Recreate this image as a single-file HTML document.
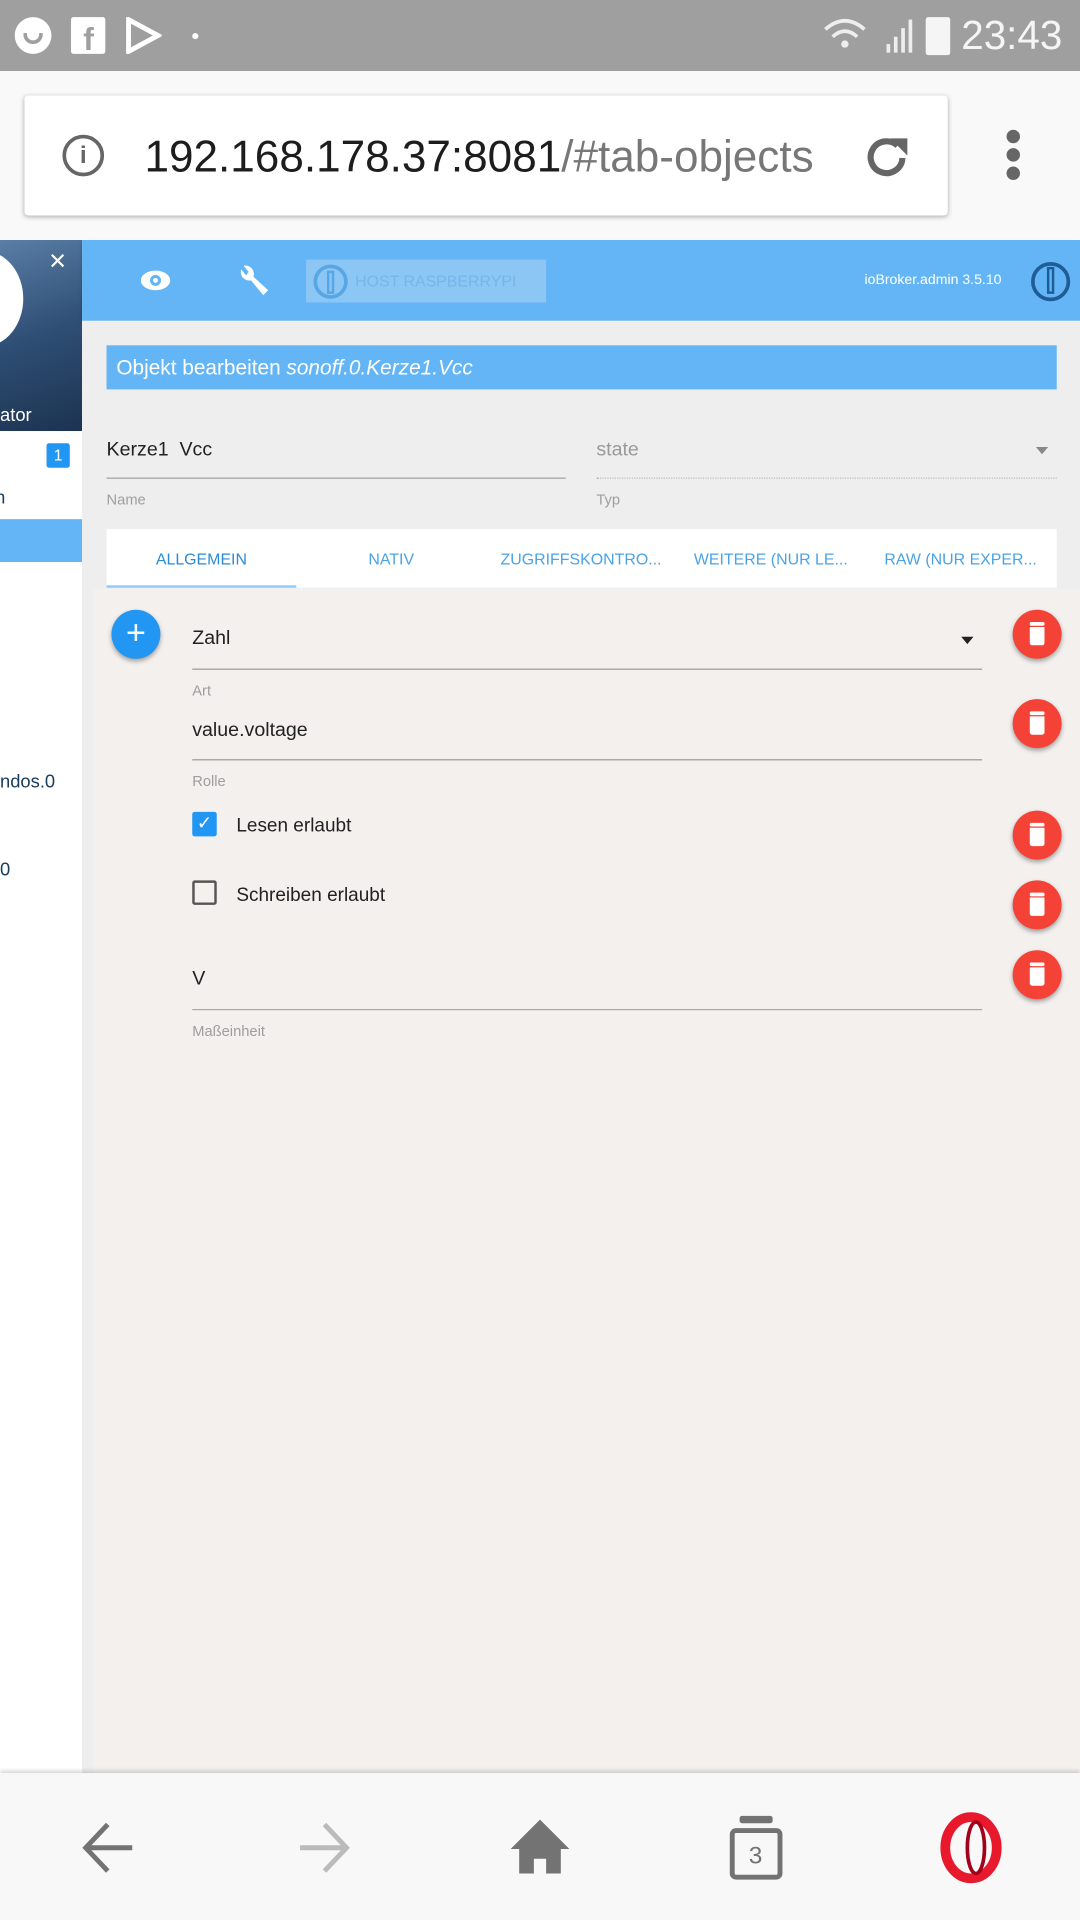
<!DOCTYPE html>
<html><head><meta charset="utf-8"><style>
*{margin:0;padding:0;box-sizing:border-box}
html,body{width:1080px;height:1920px;overflow:hidden;background:#f8f8f8}
#w{position:absolute;left:0;top:0;width:882px;height:1568px;transform:scale(1.22449);transform-origin:0 0;font-family:"Liberation Sans",sans-serif;overflow:hidden}
.a{position:absolute}
.lbl{position:absolute;font-size:12px;color:#9e9e9e}
.txt{position:absolute;font-size:16px;color:#222}
.ul{position:absolute;height:1px;background:#9a9a9a}
.tr{position:absolute;left:827px;width:40px;height:40px;border-radius:50%;background:#f44336;box-shadow:0 2px 4px rgba(0,0,0,.35)}
.tr:before{content:"";position:absolute;left:14px;top:10px;width:12px;height:3px;background:#fff;border-radius:1px}
.tr:after{content:"";position:absolute;left:14px;top:14px;width:12px;height:15px;background:#fff;border-radius:0 0 2px 2px}
.tab{position:absolute;top:449px;font-size:13px;color:#4aa3e6;width:155px;text-align:center}
</style></head><body><div id="w">
<div class="a" style="left:0;top:0;width:882px;height:58px;background:#9f9f9f"></div>
<div class="a" style="left:12px;top:14px;width:30px;height:30px;border-radius:50%;background:#fff"></div>
<div class="a" style="left:19px;top:27px;width:16px;height:9px;border:3px solid #9f9f9f;border-top:none;border-radius:0 0 9px 9px"></div>
<div class="a" style="left:58px;top:14px;width:28px;height:30px;background:#fff;border-radius:2px"></div>
<div class="a" style="left:68px;top:17px;font:bold 26px 'Liberation Sans';color:#9f9f9f">f</div>
<svg class="a" style="left:102px;top:14px" width="30" height="30"><path d="M3 2 L27 15 L3 28 Z" fill="none" stroke="#fff" stroke-width="4"/></svg>
<div class="a" style="left:157px;top:27px;width:5px;height:5px;border-radius:50%;background:#fff"></div>
<svg class="a" style="left:672px;top:12px" width="80" height="34"><path d="M2 12 Q18 -2 34 12" fill="none" stroke="#eee" stroke-width="3"/><path d="M8 18 Q18 9 28 18" fill="none" stroke="#eee" stroke-width="3"/><circle cx="18" cy="24" r="3" fill="#eee"/><rect x="52" y="24" width="3" height="7" fill="#eee"/><rect x="58" y="18" width="3" height="13" fill="#eee"/><rect x="64" y="11" width="3" height="20" fill="#eee"/><rect x="70" y="4" width="3" height="27" fill="#eee"/></svg>
<div class="a" style="left:756px;top:14px;width:20px;height:31px;background:#f5f5f5;border-radius:2px"></div>
<div class="a" style="left:785px;top:10px;font-size:33px;color:#f5f5f5">23:43</div>
<div class="a" style="left:0;top:58px;width:882px;height:138px;background:#f9f9f9"></div>
<div class="a" style="left:20px;top:78px;width:754px;height:98px;background:#fff;border-radius:3px;box-shadow:0 1px 4px rgba(0,0,0,.3);overflow:hidden">
<div class="a" style="left:31px;top:32px;width:34px;height:34px;border:3px solid #666;border-radius:50%;font:bold 20px 'Liberation Sans';color:#666;text-align:center;line-height:28px">i</div>
<div class="a" style="left:98px;top:29px;font-size:36px;color:#1d1d1d;white-space:nowrap;width:558px;overflow:hidden">192.168.178.37:8081<span style="color:#777">/#tab-objects</span></div>
<svg class="a" style="left:683px;top:29px" width="44" height="44"><path d="M34 22 A13 13 0 1 1 30 12" fill="none" stroke="#666" stroke-width="5"/><path d="M24 6 L38 6 L38 20 Z" fill="#666"/></svg>
</div>
<div class="a" style="left:822px;top:106px;width:11px;height:11px;border-radius:50%;background:#666;box-shadow:0 15px 0 #666,0 30px 0 #666"></div>
<div class="a" style="left:0;top:196px;width:67px;height:1252px;background:#fff"></div>
<div class="a" style="left:0;top:196px;width:67px;height:156px;background:linear-gradient(160deg,#5a7ea6,#2e4e74 50%,#1c3350)"></div>
<div class="a" style="left:-45px;top:205px;width:64px;height:78px;border-radius:50%;background:#fff"></div>
<div class="a" style="left:40px;top:200px;font-size:24px;color:#fff">×</div>
<div class="a" style="left:0;top:331px;font-size:15px;color:#fff">ator</div>
<div class="a" style="left:38px;top:362px;width:19px;height:20px;background:#2196f3;color:#fff;font-size:13px;text-align:center;line-height:20px;border-radius:2px">1</div>
<div class="a" style="left:-4px;top:398px;font-size:15px;color:#1a3b5c">n</div>
<div class="a" style="left:0;top:424px;width:67px;height:35px;background:#64b5f6"></div>
<div class="a" style="left:0;top:630px;font-size:15px;color:#1a3b5c">ndos.0</div>
<div class="a" style="left:0;top:702px;font-size:15px;color:#1a3b5c">0</div>
<div class="a" style="left:67px;top:196px;width:815px;height:66px;background:#64b5f6;box-shadow:0 2px 3px rgba(0,0,0,.2)"></div>
<svg class="a" style="left:114px;top:220px" width="26" height="18"><ellipse cx="13" cy="9" rx="12" ry="8" fill="#fff"/><circle cx="13" cy="9" r="4.5" fill="#64b5f6"/><circle cx="13" cy="9" r="2" fill="#fff"/></svg>
<svg class="a" style="left:193px;top:216px" width="28" height="28"><path d="M4 4 A7 7 0 0 0 12 13 L22 25 L26 21 L14 10 A7 7 0 0 0 6 1 L10 6 L8 9 Z" fill="#fff"/></svg>
<div class="a" style="left:250px;top:212px;width:196px;height:35px;background:#8cc6f5"></div>
<div class="a" style="left:256px;top:216px;width:28px;height:28px;border:3px solid #58a6e4;border-radius:50%"></div>
<div class="a" style="left:267px;top:221px;width:6px;height:19px;border:2px solid #58a6e4"></div>
<div class="a" style="left:290px;top:222px;font-size:13px;color:#76b5ea">HOST RASPBERRYPI</div>
<div class="a" style="left:706px;top:223px;font-size:11.5px;color:#fff">ioBroker.admin 3.5.10</div>
<div class="a" style="left:842px;top:214px;width:32px;height:32px;border:3px solid #1e5d96;border-radius:50%"></div>
<div class="a" style="left:855px;top:218px;width:6px;height:22px;border:2px solid #1e5d96;background:#64b5f6"></div>
<div class="a" style="left:67px;top:262px;width:815px;height:1186px;background:#eeeeee"></div>
<div class="a" style="left:87px;top:282px;width:776px;height:36px;background:#64b5f6;color:#fff;font-size:17px;padding:9px 0 0 8px">Objekt bearbeiten <i>sonoff.0.Kerze1.Vcc</i></div>
<div class="txt" style="left:87px;top:359px">Kerze1&nbsp; Vcc</div>
<div class="ul" style="left:87px;top:390px;width:375px;background:#a0a0a0"></div>
<div class="lbl" style="left:87px;top:401px">Name</div>
<div class="txt" style="left:487px;top:359px;color:#9a9a9a">state</div>
<div class="a" style="left:846px;top:365px;border:5px solid transparent;border-top:6px solid #888"></div>
<div class="a" style="left:487px;top:390px;width:376px;border-top:1px dotted #bbb"></div>
<div class="lbl" style="left:487px;top:401px">Typ</div>
<div class="a" style="left:87px;top:432px;width:776px;height:48px;background:#fff"></div>
<div class="tab" style="left:87px;color:#2a8ad8">ALLGEMEIN</div>
<div class="tab" style="left:242px">NATIV</div>
<div class="tab" style="left:397px">ZUGRIFFSKONTRO...</div>
<div class="tab" style="left:552px">WEITERE (NUR LE...</div>
<div class="tab" style="left:707px">RAW (NUR EXPER...</div>
<div class="a" style="left:87px;top:478px;width:155px;height:2px;background:#90caf9"></div>
<div class="a" style="left:76px;top:481px;width:806px;height:967px;background:#f3f0ee"></div>
<div class="a" style="left:91px;top:498px;width:40px;height:40px;border-radius:50%;background:#2196f3;box-shadow:0 2px 4px rgba(0,0,0,.35);color:#fff;font-size:28px;text-align:center;line-height:38px">+</div>
<div class="txt" style="left:157px;top:513px">Zahl</div>
<div class="a" style="left:785px;top:520px;border:5px solid transparent;border-top:6px solid #222"></div>
<div class="ul" style="left:157px;top:546px;width:645px"></div>
<div class="lbl" style="left:157px;top:557px">Art</div>
<div class="txt" style="left:157px;top:588px">value.voltage</div>
<div class="ul" style="left:157px;top:620px;width:645px"></div>
<div class="lbl" style="left:157px;top:631px">Rolle</div>
<div class="a" style="left:157px;top:663px;width:20px;height:20px;background:#2196f3;border-radius:2px;color:#fff;font-size:15px;text-align:center;line-height:20px">✓</div>
<div class="txt" style="left:193px;top:666px;font-size:15.5px">Lesen erlaubt</div>
<div class="a" style="left:157px;top:719px;width:20px;height:20px;border:2px solid #555;border-radius:2px"></div>
<div class="txt" style="left:193px;top:723px;font-size:15.5px">Schreiben erlaubt</div>
<div class="txt" style="left:157px;top:791px">V</div>
<div class="ul" style="left:157px;top:824px;width:645px;background:#aaa"></div>
<div class="lbl" style="left:157px;top:835px">Maßeinheit</div>
<div class="tr" style="top:498px"></div>
<div class="tr" style="top:571px"></div>
<div class="tr" style="top:662px"></div>
<div class="tr" style="top:719px"></div>
<div class="tr" style="top:776px"></div>
<div class="a" style="left:0;top:1448px;width:882px;height:120px;background:#f8f8f8;box-shadow:0 -2px 3px rgba(0,0,0,.15)"></div>
<svg class="a" style="left:0;top:1448px" width="882" height="120">
<path d="M108 61 L72 61 M88 42 L70 61 L88 80" fill="none" stroke="#737373" stroke-width="4"/>
<path d="M245 61 L281 61 M265 42 L283 61 L265 80" fill="none" stroke="#bbb" stroke-width="4"/>
<path d="M441 38 L465 62 L458 62 L458 82 L446 82 L446 70 L436 70 L436 82 L424 82 L424 62 L417 62 Z" fill="#737373"/>
<rect x="598" y="47" width="39" height="38" rx="3" fill="none" stroke="#737373" stroke-width="4"/>
<rect x="604" y="35" width="27" height="6" rx="2" fill="#737373"/>
<text x="617" y="74" font-family="Liberation Sans" font-size="20" fill="#737373" text-anchor="middle">3</text>
<ellipse cx="793" cy="61" rx="21" ry="25" fill="none" stroke="#e8192d" stroke-width="8"/>
<ellipse cx="797" cy="61" rx="7" ry="21" fill="none" stroke="#a3001a" stroke-width="3"/>
</svg>
</div></body></html>
